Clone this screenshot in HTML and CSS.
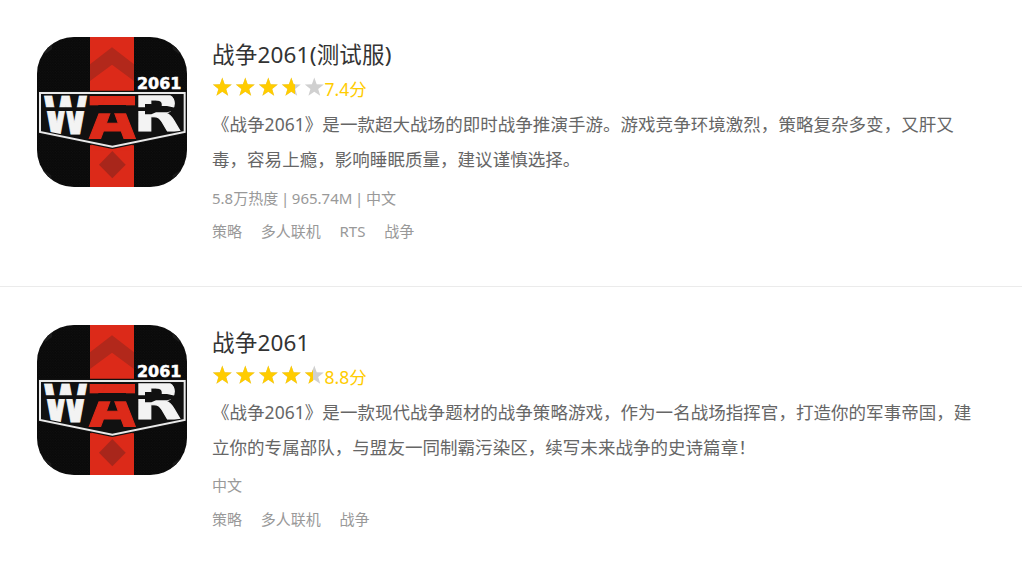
FILE: index.html
```html
<!DOCTYPE html>
<html lang="zh-CN">
<head>
    <meta charset="UTF-8">
    <meta name="viewport" content="width=device-width, initial-scale=1.0">
    <title>战争2061</title>
    <link rel="stylesheet" href="styles.css">
</head>
<body>
<!-- 公用图形 -->
<svg class="defs" width="0" height="0">
    <defs>
        <pattern id="dots" width="8" height="8" patternUnits="userSpaceOnUse">
            <circle cx="2" cy="2" r="1.3" fill="#191919"/>
            <circle cx="6" cy="6" r="1.3" fill="#191919"/>
        </pattern>
        <g id="logo-bg">
            <rect x="15" y="15" width="450" height="450" fill="#090909"/>
            <rect x="15" y="15" width="450" height="450" fill="url(#dots)"/>
            <path d="M15 50L40 65L60 52V15H15ZM465 50L440 65L422 52V15H465ZM15 430L35 415L58 430V465H15ZM465 430L445 415L422 430V465H465Z" fill="#1b1b1b"/>
            <rect x="174" y="15" width="132" height="450" fill="#dc2a19"/>
            <path d="M174 97L240 46L306 97V147L240 98L174 147Z" fill="#b2281b"/>
            <path d="M241 357L281 398L241 439L201 398Z" fill="#a8261b"/>
            <path d="M24 183H458V300L241 344L24 300Z" fill="#111"/>
            <rect x="173" y="192" width="136" height="28" fill="#dc2a19"/>
        </g>
        <!-- 火箭和盾牌边框 -->
        <g id="logo-top">
            <path d="M34 226H199V219H282V226H339V216H358L372 222H405L446 231L405 241H372L358 247H339V237H282V244H199V237H34Z" fill="#111"/>
            <path d="M18 304L24 300L241 344L458 300L464 304L241 354Z" fill="#090909"/>
            <path d="M178 333L241 346L302 333V356H178Z" fill="#dc2a19"/>
            <path d="M24 183H458V300L241 344L24 300Z" fill="none" stroke="#111" stroke-width="13"/>
            <path d="M24 183H458V300L241 344L24 300Z" fill="none" stroke="#e9e9e9" stroke-width="6"/>
        </g>
    </defs>
    <symbol id="stars" viewBox="0 0 113 20">
        <path id="star" d="M10.3 .6L12.7 7.2L19.8 7.5L14.2 11.9L16.2 18.8L10.3 14.8L4.4 18.8L6.4 11.9L.8 7.5L7.9 7.2Z"/>
        <use href="#star" x="23"/>
        <use href="#star" x="46"/>
        <use href="#star" x="69"/>
        <use href="#star" x="92"/>
    </symbol>
</svg>

<div class="game-list">
    <div class="game-item">
        <svg class="game-icon" viewBox="15 15 450 450">
            <use href="#logo-bg"/>
            <text class="logo-num" x="315" y="170" textLength="133" lengthAdjust="spacingAndGlyphs">2061</text>
            <text class="logo-war" x="34" y="307" textLength="134" lengthAdjust="spacingAndGlyphs">W</text>
            <text class="logo-war red" x="171" y="321" textLength="140" lengthAdjust="spacingAndGlyphs">A</text>
            <text class="logo-war" x="304" y="298" textLength="144" lengthAdjust="spacingAndGlyphs">R</text>
            <use href="#logo-top"/>
        </svg>
        <div class="game-info">
            <h3 class="game-name">战争2061(测试服)</h3>
            <div class="game-score">
                <div class="stars">
                    <svg class="stars-bg"><use href="#stars"/></svg>
                    <div class="stars-on" style="width: 74%"><svg><use href="#stars"/></svg></div>
                </div>
                <span>7.4分</span>
            </div>
            <p class="game-desc">《战争2061》是一款超大战场的即时战争推演手游。游戏竞争环境激烈，策略复杂多变，又肝又毒，容易上瘾，影响睡眠质量，建议谨慎选择。</p>
            <div class="game-meta">5.8万热度 | 965.74M | 中文</div>
            <div class="game-tags">
                <span>策略</span>
                <span>多人联机</span>
                <span>RTS</span>
                <span>战争</span>
            </div>
        </div>
    </div>

    <div class="game-item">
        <svg class="game-icon" viewBox="15 15 450 450">
            <use href="#logo-bg"/>
            <text class="logo-num" x="315" y="170" textLength="133" lengthAdjust="spacingAndGlyphs">2061</text>
            <text class="logo-war" x="34" y="307" textLength="134" lengthAdjust="spacingAndGlyphs">W</text>
            <text class="logo-war red" x="171" y="321" textLength="140" lengthAdjust="spacingAndGlyphs">A</text>
            <text class="logo-war" x="304" y="298" textLength="144" lengthAdjust="spacingAndGlyphs">R</text>
            <use href="#logo-top"/>
        </svg>
        <div class="game-info">
            <h3 class="game-name">战争2061</h3>
            <div class="game-score">
                <div class="stars">
                    <svg class="stars-bg"><use href="#stars"/></svg>
                    <div class="stars-on" style="width: 90%"><svg><use href="#stars"/></svg></div>
                </div>
                <span>8.8分</span>
            </div>
            <p class="game-desc">《战争2061》是一款现代战争题材的战争策略游戏，作为一名战场指挥官，打造你的军事帝国，建立你的专属部队，与盟友一同制霸污染区，续写未来战争的史诗篇章！</p>
            <div class="game-meta">中文</div>
            <div class="game-tags">
                <span>策略</span>
                <span>多人联机</span>
                <span>战争</span>
            </div>
        </div>
    </div>
</div>
</body>
</html>
```
FILE: styles.css
```css
* {
    box-sizing: border-box;
    margin: 0;
    padding: 0;
}

body {
    background-color: #fff;
    font-family: "Noto Sans", "Noto Sans CJK SC", sans-serif;
    overflow: hidden;
}

.defs {
    display: block;
}

/* 游戏列表 */
.game-item {
    display: flex;
    gap: 25px;
    height: 287px;
    margin-bottom: 0.5px;
    padding: 37px 37px 0;
    border-bottom: 1px solid #ebebeb;
}

.game-item:last-child {
    height: 274px;
    border-bottom: none;
}

.game-icon {
    flex: none;
    width: 150px;
    height: 150px;
    border-radius: 37px;
}

.game-info {
    width: 772px;
}

.game-name {
    font-size: 22.5px;
    font-weight: 400;
    line-height: 35px;
    letter-spacing: 0.2px;
    color: #333;
}

/* 评分 */
.game-score {
    display: flex;
    height: 35px;
    line-height: 35px;
    font-size: 17.5px;
    color: #fc0;
}

.stars {
    position: relative;
    width: 112.5px;
    height: 20px;
    margin-top: 5px;
}

.stars svg {
    display: block;
    width: 113px;
    height: 20px;
    fill: #fc0;
}

.stars .stars-bg {
    fill: #d0d0d0;
}

.stars-on {
    position: absolute;
    top: 0;
    left: 0;
    overflow: hidden;
}

.game-desc {
    font-size: 17.5px;
    line-height: 35px;
    letter-spacing: 0.04px;
    color: #666;
}

.game-meta,
.game-tags {
    font-size: 15px;
    line-height: 33px;
    color: #999;
}

.game-meta {
    height: 33.5px;
    margin-top: 4.6px;
    word-spacing: -1.2px;
}

.game-tags {
    display: flex;
    gap: 18.75px;
}

/* 图标文字 */
.logo-num {
    font: 700 46px "DejaVu Sans", sans-serif;
    fill: #fff;
    stroke: #fff;
    stroke-width: 1.5;
}

.logo-war {
    font: 700 152px "DejaVu Sans", sans-serif;
    fill: #f3f3f3;
    stroke: #f3f3f3;
    stroke-width: 3;
}

.logo-war.red {
    font-size: 172px;
    fill: #dc2a19;
    stroke: #dc2a19;
}
```
